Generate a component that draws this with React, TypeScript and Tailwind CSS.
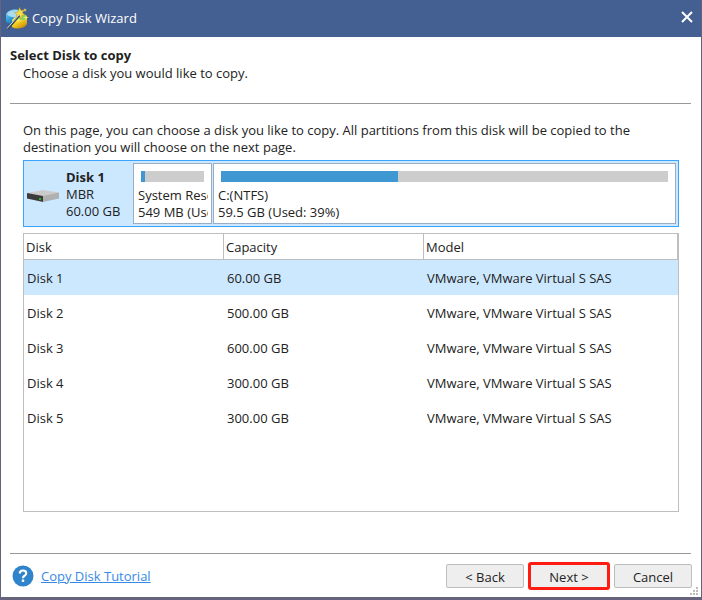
const font = "font-['Open_Sans','Noto_Sans',sans-serif]";

const disks = [
  { name: "Disk 1", capacity: "60.00 GB" },
  { name: "Disk 2", capacity: "500.00 GB" },
  { name: "Disk 3", capacity: "600.00 GB" },
  { name: "Disk 4", capacity: "300.00 GB" },
  { name: "Disk 5", capacity: "300.00 GB" },
];

function WizardIcon() {
  return (
    <svg className="size-6" viewBox="0 0 24 24" aria-hidden="true">
      <defs>
        <linearGradient id="blue" x1="0" y1="0" x2="0.6" y2="1">
          <stop offset="0" stopColor="#a5def5" />
          <stop offset="0.5" stopColor="#3aa9dd" />
          <stop offset="1" stopColor="#1470b4" />
        </linearGradient>
        <linearGradient id="gold" x1="0" y1="0" x2="0.7" y2="1">
          <stop offset="0" stopColor="#fff27a" />
          <stop offset="0.55" stopColor="#f5cb22" />
          <stop offset="1" stopColor="#c98b08" />
        </linearGradient>
      </defs>
      <path d="M1 8q0-4 7-5.500Q12 2 14 3l-1 9-6 5q-5-1-6-3z" fill="url(#blue)" />
      <path d="M2 7q2-4 10-4l2 1-2 6Q5 11 2 7" fill="#a9dcf0" />
      <path d="M7 13q4 1 8-1 4-1 7-3v8q-2 4-9 4.500-4 0-6-1.500z" fill="url(#gold)" />
      <path d="M7 13q2-3 6-4l8 0q-1 4-7 5.500-5 1-7-1.500" fill="#ffe957" />
      <path d="m12 9 4-2 5 1 1 4q-4 2-7 1z" fill="#8ed45d" />
      <path d="m14.500.500 1.500 3 3-.5-1.500 3 2.500 2-3 .500-.5 3-2.500-2-3 1 1-3-2.500-2 3.500-.500z" fill="#f3dc4a" stroke="#bd9218" strokeWidth=".5" />
      <path d="m20 1 .5 1.500L22 3l-1.500.5L20 5l-.5-1.500L18 3l1.500-.5zM21 8l.7 2 2 .5-2 .7-.7 2-.7-2-2-.7 2-.5z" fill="#ffe865" />
      <path d="M2.500 22 14.500 8.500" stroke="#3d4756" strokeWidth="2" />
      <path d="M2 21.500 14 8" stroke="#d8dce0" strokeWidth="1" />
    </svg>
  );
}

function DriveIcon() {
  return (
    <svg className="mt-0.5 h-3 w-8 shrink-0" viewBox="0 0 32 12" aria-hidden="true">
      <path d="M0 3 16 0l16 2.500V5L16 8z" fill="#cbcbcb" />
      <path d="M0 3 16 6v6L0 8.500z" fill="#3c3c3c" />
      <path d="m16 6 16-3.500v6L16 12z" fill="#b0b0b0" />
      <path d="M12 8h2v2h-2z" fill="#28b52d" />
    </svg>
  );
}

function HelpIcon() {
  return (
    <svg className="ml-0.5 size-[22px]" viewBox="0 0 22 22" aria-hidden="true">
      <circle cx="11" cy="11" r="10.5" fill="#2f84cb" />
      <path d="M7.800 8.500Q7.800 5.500 11 5.500t3.200 2.800Q14.200 10 12.300 11 11 11.800 11 13.200" fill="none" stroke="white" strokeWidth="2.200" />
      <path d="M9.800 14.500h2.400v2.400H9.800z" fill="white" />
    </svg>
  );
}

function Partition({ name, size, used, className }: { name: string; size: string; used: number; className: string }) {
  return (
    <div className={`min-w-0 border border-[#9badc6] bg-white pt-[7px] pr-[3px] pl-1 ${className}`}>
      <div className="mr-1 mb-[5px] ml-[3px] h-[11px] bg-[#cdcdcd]">
        <div className="h-full bg-[#3f98d2]" style={{ width: `${used}%` }} />
      </div>
      <div className="overflow-hidden leading-[17px] whitespace-nowrap">{name}</div>
      <div className="overflow-hidden leading-[17px] whitespace-nowrap">{size}</div>
    </div>
  );
}

const button = "h-6 w-[78px] rounded-[2px] border border-[#bdbdbd] bg-[#eeeeee] pt-0.5 text-center leading-5";
const headCell = "border-r border-b border-[#bebebe] px-0.5 pt-0.5 pb-0 font-normal";
const bodyCell = "px-[3px] pt-0.5 pb-0";

export default function App() {
  return (
    <div className={`flex min-h-screen flex-col bg-[#66637c] px-px pb-[3px] text-[13px] leading-[17px] text-[#222222] ${font}`}>
      <header className="flex h-[37px] items-center bg-[#445f91] pr-2 pl-1 text-white">
        <WizardIcon />
        <h1 className="ml-[3px] flex-1">Copy Disk Wizard</h1>
        <button type="button" aria-label="Close" className="mb-1 p-0">
          <svg className="size-3" viewBox="0 0 12 12" aria-hidden="true">
            <path d="m1 1 10 10M11 1 1 11" stroke="white" strokeWidth="2" />
          </svg>
        </button>
      </header>
      <main className="flex flex-1 flex-col bg-white pr-[10px] pl-[9px]">
        <div className="border-b border-[#999999] pt-[9px] pb-[21px]">
          <h2 className="leading-[18px] font-bold">Select Disk to copy</h2>
          <p className="pl-[13px] leading-[18px]">Choose a disk you would like to copy.</p>
        </div>
        <div className="flex flex-1 flex-col pr-3 pb-[41px] pl-[13px]">
          <p className="pt-[18px] pb-1">
            On this page, you can choose a disk you like to copy. All partitions from this disk will be copied to the destination you will choose on the next page.
          </p>
          <div className="flex h-[67px] border border-[#3ba3fb] bg-[#cce8ff] p-0.5">
            <div className="flex w-[107px] items-center gap-[7px] pt-0.5 pl-px">
              <DriveIcon />
              <div>
                <div className="font-bold">Disk 1</div>
                <div>MBR</div>
                <div>60.00 GB</div>
              </div>
            </div>
            <Partition name="System Rese" size="549 MB (Use" used={6} className="mr-px w-[79px]" />
            <Partition name="C:(NTFS)" size="59.5 GB (Used: 39%)" used={39.5} className="flex-1" />
          </div>
          <div className="mt-1.5 flex-1 border border-[#bebebe]">
            <table className="w-full table-fixed border-separate border-spacing-0 text-left">
              <thead>
                <tr className="h-[26px]">
                  <th className={`w-[200px] ${headCell}`}>Disk</th>
                  <th className={`w-[200px] ${headCell}`}>Capacity</th>
                  <th className={headCell}>Model</th>
                </tr>
              </thead>
              <tbody>
                {disks.map((disk, i) => (
                  <tr key={disk.name} className={`h-[35px] ${i === 0 ? "bg-[#cce8ff]" : ""}`}>
                    <td className={bodyCell}>{disk.name}</td>
                    <td className={bodyCell}>{disk.capacity}</td>
                    <td className={bodyCell}>VMware, VMware Virtual S SAS</td>
                  </tr>
                ))}
              </tbody>
            </table>
          </div>
        </div>
        <footer className="relative flex h-11 items-center border-t border-[#999999]">
          <HelpIcon />
          <a href="#tutorial" className="ml-[7px] pt-px text-[#3689e6] underline">Copy Disk Tutorial</a>
          <div className="-mr-px ml-auto flex items-center gap-1">
            <button type="button" className={button}>&lt; Back</button>
            <button type="button" className="h-7 w-[82px] rounded-[3px] border-[3px] border-[#ff1d12] bg-[#eeeeee] pt-0.5 leading-5">Next &gt;</button>
            <button type="button" className={button}>Cancel</button>
          </div>
          <svg className="absolute right-[-7px] bottom-0.5 size-2" viewBox="0 0 8 8" aria-hidden="true">
            <path d="M6 0h2v2H6zM3 3h2v2H3zM6 3h2v2H6zM0 6h2v2H0zM3 6h2v2H3zM6 6h2v2H6z" fill="#bdbdbd" />
          </svg>
        </footer>
      </main>
    </div>
  );
}
